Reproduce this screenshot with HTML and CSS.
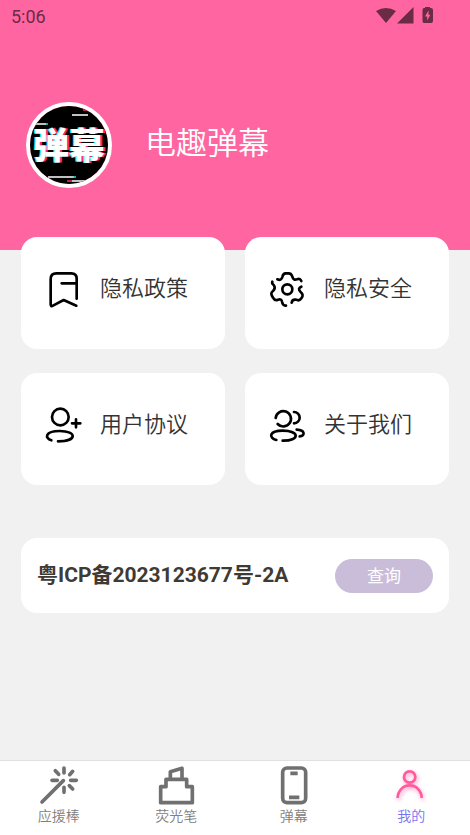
FILE: index.html
```html
<!DOCTYPE html>
<html lang="zh-CN">
<head>
<meta charset="utf-8">
<meta name="viewport" content="width=device-width, initial-scale=1">
<title>我的</title>
<link rel="stylesheet" href="styles.css">
</head>
<body>
<header class="hero">
  <div class="status">
    <span class="time">5:06</span>
    <svg class="status-icons" viewBox="0 0 58 18" aria-hidden="true">
      <path d="M0 4Q10-2 20 4L10 16Z"/>
      <path d="M21 16.500L37.500 0V16.500Z"/>
      <path fill-rule="evenodd" d="M49 1V0H54V1H55Q57 1 57 3V14Q57 16 55 16H48Q46.500 16 46.500 14V3Q46.500 1 48 1ZM52.500 3.500L49 9.500H51.200V13.500L54.300 7.800H52.500Z"/>
    </svg>
  </div>
  <div class="profile">
    <svg class="avatar" viewBox="0 0 78 78" role="img" aria-label="弹幕">
      <rect width="78" height="78" fill="#000"/>
      <text class="avatar-text" x="39" y="53" text-anchor="middle">弹幕</text>
      <path d="M42 9H58M4 18H16M18 71H44M42 75H57" stroke="#fff" stroke-width="1.500"/>
      <path d="M53 4H58M37 75H42" stroke="#ff2868" stroke-width="1.500"/>
      <path d="M43 71H46M16 18H18" stroke="#16e5df" stroke-width="1.500"/>
    </svg>
    <h1 class="name">电趣弹幕</h1>
  </div>
</header>
<main class="content">
  <div class="cards">
    <a class="card" href="#privacy">
      <svg class="card-icon" viewBox="0 0 108 108" aria-hidden="true"><path d="M92 83V23Q92 7 76 7H31Q14 7 14 24V100Q14 108 21 104L53 87L91 104M47 37H92"/></svg>
      <span>隐私政策</span>
    </a>
    <a class="card" href="#security">
      <svg class="card-icon" viewBox="0 0 108 108" aria-hidden="true"><circle cx="52" cy="55" r="15"/><path d="M22 25Q34 30 37 18Q39 7 47 7H56Q64 7 67 17Q70 29 81 25Q90 21 94 30M94 47Q82 52 91 62Q103 72 94 82Q88 91 78 86Q67 84 65 95M7 32Q5 38 11 42Q18 51 9 60Q-1 67 9 80Q14 90 24 86Q35 83 36 92Q38 105 48 104"/></svg>
      <span>隐私安全</span>
    </a>
    <a class="card" href="#agreement">
      <svg class="card-icon" viewBox="0 0 108 108" aria-hidden="true"><circle cx="43" cy="30" r="25"/><path d="M90 37V61M78 49H103M16 100C-4 94-4 72 41 72C94 72 94 103 36 103"/></svg>
      <span>用户协议</span>
    </a>
    <a class="card" href="#about">
      <svg class="card-icon" viewBox="0 0 108 108" aria-hidden="true"><path d="M17 33A23 23 0 1 1 23 51M72 15A17 17 0 1 1 72 49M19 99C-5 92-3 71 38 71C90 71 90 102 38 101M80 68C106 69 106 87 89 88"/></svg>
      <span>关于我们</span>
    </a>
  </div>
  <section class="record">
    <strong class="record-number">粤ICP备2023123677号-2A</strong>
    <button class="query" type="button">查询</button>
  </section>
</main>
<nav class="tabs">
  <a class="tab" href="#stick">
    <svg class="tab-icon" viewBox="0 0 120 120" aria-hidden="true"><path d="M9 111L73 47M75 9V24M49 17L59 28M101 19L92 29M39 46H55M95 46H112M75 67V82M91 62L101 72"/></svg>
    <span>应援棒</span>
  </a>
  <a class="tab" href="#pen">
    <svg class="tab-icon" viewBox="0 0 120 120" aria-hidden="true"><path d="M14 113V65H30V43H92V65H109V113ZM43 40V20L78 10V40"/></svg>
    <span>荧光笔</span>
  </a>
  <a class="tab" href="#barrage">
    <svg class="tab-icon" viewBox="0 0 120 120" aria-hidden="true"><rect x="26" y="9" width="69" height="104" rx="13"/><path class="butt" d="M49 25H71M45 97H76"/></svg>
    <span>弹幕</span>
  </a>
  <a class="tab active" href="#mine" aria-current="page">
    <svg class="tab-icon" viewBox="0 0 120 120" aria-hidden="true"><circle cx="56" cy="36" r="17"/><path class="butt" d="M20 99A36 38 0 0 1 92 99"/></svg>
    <span>我的</span>
  </a>
</nav>
</body>
</html>
```

FILE: styles.css
```css
* {
  box-sizing: border-box;
}

body {
  margin: 0;
  min-height: 100vh;
  display: flex;
  flex-direction: column;
  background: #f1f1f1;
  color: #333;
  font-family: Roboto, "Noto Sans CJK SC", sans-serif;
}

a {
  color: inherit;
  text-decoration: none;
}

.hero {
  height: 250px;
  background: #ff66a1;
}

.status {
  display: flex;
  justify-content: space-between;
  align-items: center;
  height: 32px;
  padding: 0 36px 0 11px;
  color: #6b2b45;
}

.time {
  font-size: 18px;
}

.status-icons {
  width: 58px;
  height: 18px;
  fill: currentColor;
}

.profile {
  display: flex;
  align-items: center;
  gap: 33px;
  padding: 70px 26px 0;
}

.avatar {
  width: 86px;
  height: 86px;
  border: 4px solid #fff;
  border-radius: 50%;
}

.avatar-text {
  fill: #fff;
  font-family: "Noto Sans CJK SC", sans-serif;
  font-size: 36px;
  font-weight: 900;
  text-shadow: -1px 0 #16e5df, 2px 0 #ff2868;
}

.name {
  margin: 0 0 2px;
  color: #fff;
  font-size: 31px;
  font-weight: 350;
  line-height: 40px;
}

.content {
  flex: 1;
  margin-top: -13px;
  padding: 0 21px 24px;
}

.cards {
  display: grid;
  grid-template-columns: 1fr 1fr;
  gap: 24px 20px;
}

.card {
  display: flex;
  align-items: center;
  gap: 18px;
  height: 112px;
  padding: 0 25px 8px;
  border-radius: 16px;
  background: #fff;
  font-size: 22px;
  font-weight: 350;
  line-height: 32px;
}

.card-icon {
  width: 36px;
  height: 36px;
  overflow: visible;
  fill: none;
  stroke: #000;
  stroke-width: 8;
  stroke-linecap: round;
  stroke-linejoin: round;
}

.record {
  display: flex;
  align-items: center;
  justify-content: space-between;
  height: 75px;
  margin-top: 53px;
  padding: 0 16px;
  border-radius: 16px;
  background: #fff;
}

.record-number {
  padding-bottom: 5px;
  color: #3f3a33;
  font-size: 21px;
  font-weight: 700;
}

.query {
  width: 98px;
  height: 34px;
  padding: 0 0 2px;
  border: 0;
  border-radius: 17px;
  background: #cabdd9;
  color: #fff;
  font: inherit;
  font-size: 17px;
}

.tabs {
  display: flex;
  height: 75px;
  border-top: 1px solid #e0e0e0;
  background: #fff;
}

.tab {
  flex: 1;
  display: flex;
  flex-direction: column;
  align-items: center;
  padding-top: 4px;
  color: #808080;
  font-size: 14px;
  font-weight: 350;
  line-height: 22px;
}

.tab-icon {
  width: 40px;
  height: 40px;
  overflow: visible;
  fill: none;
  stroke: #707070;
  stroke-width: 11;
  stroke-linecap: round;
  stroke-linejoin: round;
}

.tab-icon .butt {
  stroke-linecap: butt;
}

.active {
  color: #7a73f0;
}

.active .tab-icon {
  stroke: #ff5c9f;
  stroke-width: 8;
  filter: drop-shadow(1px 2px 2px #ff9cc4);
}
```
